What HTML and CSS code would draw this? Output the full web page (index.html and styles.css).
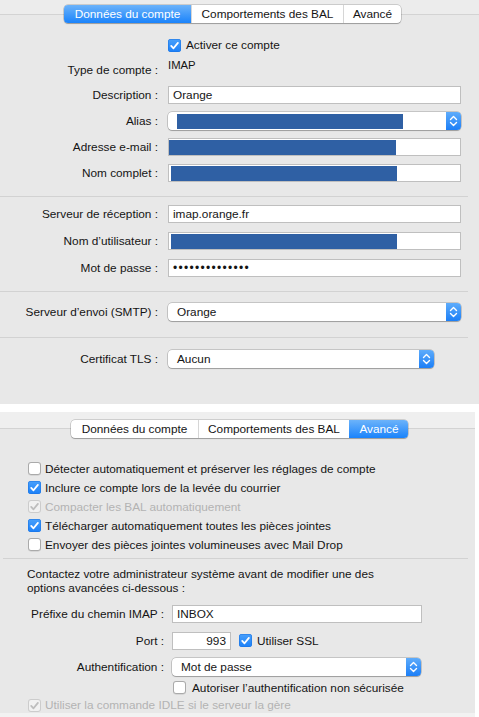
FILE: index.html
```html
<!DOCTYPE html>
<html lang="fr">
<head>
<meta charset="utf-8">
<title>Compte</title>
<link rel="stylesheet" href="styles.css">
</head>
<body>
<section class="panel panel-account">
  <div class="tabbar tabbar-account">
    <div class="tabs tabs-account">
      <span class="tab t1 selected">Données du compte</span>
      <span class="tab t2">Comportements des BAL</span>
      <span class="tab t3">Avancé</span>
    </div>
  </div>
  <div class="form">
    <div class="row row-enable">
      <span class="label"></span>
      <label class="check"><span class="box on"><svg viewBox="0 0 13 13"><path d="M3.2 6.9 L5.5 9.3 L9.9 3.9"/></svg></span>Activer ce compte</label>
    </div>
    <div class="row row-type">
      <span class="label label-type">Type de compte :</span>
      <span class="value">IMAP</span>
    </div>
    <div class="row row-field first">
      <span class="label">Description :</span>
      <span class="input">Orange</span>
    </div>
    <div class="row row-field">
      <span class="label">Alias :</span>
      <span class="popup"><span class="popup-text popup-redacted"><span class="redact redact-alias"></span></span><span class="stepper"><svg viewBox="0 0 15 18"><path d="M4.5 7.5 L7.5 4.5 L10.5 7.5 M4.5 10.5 L7.5 13.5 L10.5 10.5"/></svg></span></span>
    </div>
    <div class="row row-field">
      <span class="label">Adresse e-mail :</span>
      <span class="input input-redacted"><span class="redact redact-mail"></span></span>
    </div>
    <div class="row row-field">
      <span class="label">Nom complet :</span>
      <span class="input input-redacted"><span class="redact redact-name"></span></span>
    </div>
    <hr class="sep sep-a">
    <div class="row row-field after-sep">
      <span class="label">Serveur de réception :</span>
      <span class="input">imap.orange.fr</span>
    </div>
    <div class="row row-field wide">
      <span class="label">Nom d’utilisateur :</span>
      <span class="input input-redacted"><span class="redact redact-name"></span></span>
    </div>
    <div class="row row-field wide">
      <span class="label">Mot de passe :</span>
      <span class="input dots">••••••••••••••</span>
    </div>
    <hr class="sep sep-b">
    <div class="row row-field smtp">
      <span class="label">Serveur d’envoi (SMTP) :</span>
      <span class="popup"><span class="popup-text">Orange</span><span class="stepper"><svg viewBox="0 0 15 18"><path d="M4.5 7.5 L7.5 4.5 L10.5 7.5 M4.5 10.5 L7.5 13.5 L10.5 10.5"/></svg></span></span>
    </div>
    <hr class="sep sep-c">
    <div class="row row-field tls">
      <span class="label">Certificat TLS :</span>
      <span class="popup popup-tls"><span class="popup-text">Aucun</span><span class="stepper"><svg viewBox="0 0 15 18"><path d="M4.5 7.5 L7.5 4.5 L10.5 7.5 M4.5 10.5 L7.5 13.5 L10.5 10.5"/></svg></span></span>
    </div>
  </div>
</section>

<section class="panel panel-advanced">
  <div class="tabbar tabbar-advanced">
    <div class="tabs tabs-advanced">
      <span class="tab u1">Données du compte</span>
      <span class="tab u2">Comportements des BAL</span>
      <span class="tab u3 selected">Avancé</span>
    </div>
  </div>
  <div class="options">
    <label class="check opt"><span class="box"></span>Détecter automatiquement et préserver les réglages de compte</label>
    <label class="check opt"><span class="box on"><svg viewBox="0 0 13 13"><path d="M3.2 6.9 L5.5 9.3 L9.9 3.9"/></svg></span>Inclure ce compte lors de la levée du courrier</label>
    <label class="check opt disabled"><span class="box dis"><svg viewBox="0 0 13 13"><path d="M3.2 6.9 L5.5 9.3 L9.9 3.9"/></svg></span>Compacter les BAL automatiquement</label>
    <label class="check opt"><span class="box on"><svg viewBox="0 0 13 13"><path d="M3.2 6.9 L5.5 9.3 L9.9 3.9"/></svg></span>Télécharger automatiquement toutes les pièces jointes</label>
    <label class="check opt"><span class="box"></span>Envoyer des pièces jointes volumineuses avec Mail Drop</label>
  </div>
  <hr class="sep sep-d">
  <p class="note">Contactez votre administrateur système avant de modifier une des<br>options avancées ci-dessous :</p>
  <div class="adv-form">
    <div class="arow prefix">
      <span class="alabel">Préfixe du chemin IMAP :</span>
      <span class="input input-prefix">INBOX</span>
    </div>
    <div class="arow port">
      <span class="alabel">Port :</span>
      <span class="input input-port">993</span>
      <label class="check ssl"><span class="box on"><svg viewBox="0 0 13 13"><path d="M3.2 6.9 L5.5 9.3 L9.9 3.9"/></svg></span>Utiliser SSL</label>
    </div>
    <div class="arow auth">
      <span class="alabel">Authentification :</span>
      <span class="popup popup-auth"><span class="popup-text">Mot de passe</span><span class="stepper"><svg viewBox="0 0 15 18"><path d="M4.5 7.5 L7.5 4.5 L10.5 7.5 M4.5 10.5 L7.5 13.5 L10.5 10.5"/></svg></span></span>
    </div>
    <div class="arow insecure">
      <span class="alabel"></span>
      <label class="check"><span class="box"></span>Autoriser l’authentification non sécurisée</label>
    </div>
  </div>
  <label class="check opt disabled idle"><span class="box dis"><svg viewBox="0 0 13 13"><path d="M3.2 6.9 L5.5 9.3 L9.9 3.9"/></svg></span>Utiliser la commande IDLE si le serveur la gère</label>
</section>
</body>
</html>
```

FILE: styles.css
```css
* { box-sizing: border-box; }

html, body {
  margin: 0;
  padding: 0;
  background: #ffffff;
}

body {
  width: 479px;
  height: 717px;
  overflow: hidden;
  font-family: "Liberation Sans", Arial, sans-serif;
  font-size: 11.8px;
  color: #141414;
  background: #f2f2f2;
}

.panel {
  background: #e8e8e8;
  display: flex;
  flex-direction: column;
}

.panel-account {
  width: 479px;
  height: 404px;
}

.panel-advanced {
  width: 475px;
  height: 301px;
  margin-top: 8px;
  box-shadow: 0 -8px 0 #ffffff, 4px -8px 0 #ffffff;
  position: relative;
}

.panel-advanced::after {
  content: "";
  position: absolute;
  left: 475px;
  top: 0;
  width: 4px;
  height: 305px;
  background: #ffffff;
}

/* ---------- tabs ---------- */
.tabbar {
  border-bottom: 1px solid #d3d3d3;
  display: flex;
  flex-shrink: 0;
}

.tabbar-account {
  height: 15px;
  background: #ececec;
  padding-left: 64px;
}

.tabbar-advanced {
  height: 17px;
  background: #efefef;
  padding-left: 71px;
}

.tabs {
  display: flex;
  height: 18px;
  background: #ffffff;
  border-radius: 4px;
  box-shadow: 0 0 0 0.5px rgba(0, 0, 0, 0.28), 0 1px 1px rgba(0, 0, 0, 0.22);
  position: relative;
  z-index: 1;
}

.tabs-account { margin-top: 5px; }
.tabs-advanced { margin-top: 8px; }

.tab {
  display: flex;
  align-items: center;
  justify-content: center;
  height: 18px;
  color: #141414;
  border-left: 1px solid #d6d6d6;
  white-space: nowrap;
}

.tab:first-child { border-left: none; border-radius: 4px 0 0 4px; }
.tab:last-child { border-radius: 0 4px 4px 0; }

.tab.selected {
  color: #ffffff;
  border-left-color: transparent;
  background: linear-gradient(#6cb3fa, #1a83fb);
}

.t1 { width: 127px; }
.t2 { width: 152px; }
.t3 { width: 58px; }
.u1 { width: 127px; }
.u2 { width: 151px; }
.u3 { width: 59px; }

/* ---------- checkboxes ---------- */
.check {
  display: flex;
  align-items: center;
  gap: 4px;
  white-space: nowrap;
  color: #141414;
}

.box {
  width: 13px;
  height: 13px;
  border-radius: 3px;
  background: #ffffff;
  box-shadow: inset 0 0 0 1px #aaaaaa, 0 0.5px 0.5px rgba(0, 0, 0, 0.15);
  display: flex;
  flex-shrink: 0;
}

.box svg {
  width: 13px;
  height: 13px;
}

.box svg path {
  fill: none;
  stroke: #ffffff;
  stroke-width: 1.8;
  stroke-linecap: round;
  stroke-linejoin: round;
}

.box.on {
  background: linear-gradient(#49a0fb, #1b80f8);
  box-shadow: inset 0 0 0 0.5px #1a73e0;
}

.box.dis {
  background: #f1f1f1;
  box-shadow: inset 0 0 0 1px #cccccc;
}

.box.dis svg path { stroke: #bdbdbd; }

.check.disabled { color: #b3b3b3; }

/* ---------- account form ---------- */
.form {
  display: flex;
  flex-direction: column;
}

.row {
  display: flex;
  align-items: center;
}

.label {
  width: 158px;
  margin-right: 10px;
  text-align: right;
  white-space: nowrap;
  flex-shrink: 0;
}

.row-enable { margin-top: 23px; height: 14px; }
.row-enable .check { gap: 5px; }

.row-type {
  margin-top: 5px;
  align-items: flex-start;
  height: 21px;
  line-height: 16px;
}

.label-type { margin-top: 5px; }
.value { font-size: 11.3px; }

.row-field { height: 18px; margin-top: 8px; }
.row-field.first { margin-top: 8px; }
.row-field.after-sep { margin-top: 8px; }
.row-field.wide { margin-top: 9px; }
.row-field.smtp { margin-top: 11px; }
.row-field.tls { margin-top: 12px; }

.input {
  display: flex;
  align-items: center;
  height: 18px;
  width: 293px;
  background: #ffffff;
  border: 1px solid #bfbfbf;
  padding-left: 4px;
  white-space: nowrap;
}

.input-redacted { padding-left: 0; }

.dots {
  font-size: 12px;
  letter-spacing: 1.3px;
  padding-left: 4px;
}

.redact {
  display: block;
  background: #2f60a4;
}

.redact-mail { width: 227px; height: 15px; margin-top: 1px; }
.redact-name { width: 226px; height: 15px; margin-left: 2px; margin-top: 1px; }
.redact-alias { width: 226px; height: 15px; }

.popup {
  display: flex;
  height: 18px;
  width: 293px;
  background: #ffffff;
  border-radius: 4px;
  box-shadow: 0 0 0 0.5px rgba(0, 0, 0, 0.3), 0 1px 1px rgba(0, 0, 0, 0.2);
}

.popup-tls { width: 266px; }

.popup-text {
  flex: 1;
  display: flex;
  align-items: center;
  padding-left: 9px;
  white-space: nowrap;
}

.popup-redacted { padding-left: 9px; }

.stepper {
  width: 15px;
  height: 18px;
  border-radius: 0 4px 4px 0;
  background: linear-gradient(#5eacfb, #1c7ff7);
  display: flex;
}

.stepper svg {
  width: 15px;
  height: 18px;
}

.stepper svg path {
  fill: none;
  stroke: #ffffff;
  stroke-width: 1.4;
  stroke-linecap: round;
  stroke-linejoin: round;
}

.sep {
  margin: 0;
  border: none;
  height: 1px;
  background: #d2d2d2;
}

.sep-a { margin-top: 14px; margin-right: 11px; }
.sep-b { margin-top: 14px; margin-right: 11px; }
.sep-c { margin-top: 16px; margin-right: 11px; }

/* ---------- advanced ---------- */
.options {
  display: flex;
  flex-direction: column;
  margin-top: 30px;
  padding-left: 28px;
}

.opt { height: 19px; }

.sep-d { margin: 4px 7px 0 3px; }

.note {
  margin: 8px 0 0 27px;
  line-height: 14px;
}

.adv-form {
  display: flex;
  flex-direction: column;
}

.arow {
  display: flex;
  align-items: center;
  height: 18px;
}

.alabel {
  width: 164px;
  margin-right: 8px;
  text-align: right;
  white-space: nowrap;
  flex-shrink: 0;
}

.prefix { margin-top: 10px; }
.port { margin-top: 9px; }
.auth { margin-top: 8px; }
.insecure { margin-top: 4px; height: 16px; }
.insecure .check { margin-left: 1px; gap: 6px; }

.input-prefix { width: 250px; }

.input-port {
  width: 59px;
  justify-content: flex-end;
  padding-right: 4px;
}

.ssl { margin-left: 8px; gap: 5px; }

.popup-auth { width: 249px; }

.idle {
  margin-top: 2px;
  margin-left: 28px;
  height: 16px;
}
```
